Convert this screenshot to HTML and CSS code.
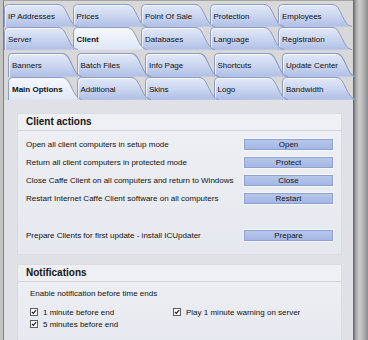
FILE: index.html
```html
<!DOCTYPE html>
<html>
<head>
<meta charset="utf-8">
<link rel="stylesheet" href="styles.css">
</head>
<body>
<div class="window">
  <div class="main">
    <div class="tabs outer">
      <div class="tabrow">
        <div class="tab">IP Addresses</div>
        <div class="tab">Prices</div>
        <div class="tab">Point Of Sale</div>
        <div class="tab">Protection</div>
        <div class="tab">Employees</div>
      </div>
      <div class="tabrow">
        <div class="tab">Server</div>
        <div class="tab active">Client</div>
        <div class="tab">Databases</div>
        <div class="tab">Language</div>
        <div class="tab">Registration</div>
      </div>
    </div>
    <div class="tabs inner">
      <div class="tabrow tall">
        <div class="tab">Banners</div>
        <div class="tab">Batch Files</div>
        <div class="tab">Info Page</div>
        <div class="tab">Shortcuts</div>
        <div class="tab">Update Center</div>
      </div>
      <div class="tabrow">
        <div class="tab active">Main Options</div>
        <div class="tab">Additional</div>
        <div class="tab">Skins</div>
        <div class="tab">Logo</div>
        <div class="tab">Bandwidth</div>
      </div>
    </div>
    <div class="panel">
      <section class="group">
        <div class="group-head">Client actions</div>
        <div class="group-body actions">
          <div class="row"><span>Open all client computers in setup mode</span><span class="btn">Open</span></div>
          <div class="row"><span>Return all client computers in protected mode</span><span class="btn">Protect</span></div>
          <div class="row"><span>Close Caffe Client on all computers and return to Windows</span><span class="btn">Close</span></div>
          <div class="row"><span>Restart Internet Caffe Client software on all computers</span><span class="btn">Restart</span></div>
          <div class="row spaced"><span>Prepare Clients for first update - install ICUpdater</span><span class="btn">Prepare</span></div>
        </div>
      </section>
      <section class="group second">
        <div class="group-head">Notifications</div>
        <div class="group-body notes">
          <div class="note">Enable notification before time ends</div>
          <div class="checks">
            <label class="chk"><span class="box"><svg viewBox="0 0 6 6" width="6" height="6"><path d="M0.9 2.9 L2.3 4.4 L5.1 1.2" fill="none" stroke="#1b1b1b" stroke-width="1.1"/></svg></span>1 minute before end</label>
            <label class="chk"><span class="box"><svg viewBox="0 0 6 6" width="6" height="6"><path d="M0.9 2.9 L2.3 4.4 L5.1 1.2" fill="none" stroke="#1b1b1b" stroke-width="1.1"/></svg></span>Play 1 minute warning on server</label>
            <label class="chk"><span class="box"><svg viewBox="0 0 6 6" width="6" height="6"><path d="M0.9 2.9 L2.3 4.4 L5.1 1.2" fill="none" stroke="#1b1b1b" stroke-width="1.1"/></svg></span>5 minutes before end</label>
          </div>
        </div>
      </section>
    </div>
  </div>
  <div class="scroll"></div>
</div>
</body>
</html>
```
FILE: styles.css
```css
html, body {
  margin: 0;
  padding: 0;
}
body {
  font-family: "Liberation Sans", Arial, sans-serif;
  font-size: 8px;
  color: #111111;
  background: #c8c8c8;
}
.window {
  display: flex;
  width: 368px;
  height: 340px;
  overflow: hidden;
  background: #c4c4c4;
  padding-left: 3px;
  box-sizing: border-box;
}
.main {
  flex: 0 0 350px;
  display: flex;
  flex-direction: column;
  border-left: 1px solid #808080;
  border-top: 1px solid #a4a4a4;
  background: #d8d8d8;
  box-sizing: border-box;
  padding-top: 3px;
}
.tabs {
  display: flex;
  flex-direction: column;
}
.inner {
  margin-top: 3px;
  padding-left: 4px;
}
.tabrow {
  display: flex;
  height: 23px;
}
.tabrow.tall {
  height: 24px;
}
.tab {
  position: relative;
  flex: 0 0 74px;
  margin-right: -5.5px;
  box-sizing: border-box;
  padding: 1px 0 0 4px;
  display: flex;
  align-items: center;
  white-space: nowrap;
  color: #111111;
  background: url("data:image/svg+xml;utf8,<svg xmlns='http://www.w3.org/2000/svg' width='74' height='23' viewBox='0 0 74 23' preserveAspectRatio='none'><defs><linearGradient id='g' x1='0' y1='0' x2='0' y2='1'><stop offset='0' stop-color='%23e3e9f7'/><stop offset='0.5' stop-color='%23cbd6f0'/><stop offset='1' stop-color='%23afbee6'/></linearGradient></defs><path d='M0.5,23 V4.5 Q0.5,0.5 4.5,0.5 H55 C63,0.5 65,22.5 74,22.5' fill='url(%23g)' stroke='%238e9bc0'/><path d='M1.5,23 V5 Q1.5,1.5 5,1.5 H54' fill='none' stroke='%23ffffff' stroke-opacity='0.7'/></svg>") no-repeat 0 0 / 100% 100%;
}
.tab.active {
  font-weight: bold;
  background: url("data:image/svg+xml;utf8,<svg xmlns='http://www.w3.org/2000/svg' width='74' height='23' viewBox='0 0 74 23' preserveAspectRatio='none'><defs><linearGradient id='g' x1='0' y1='0' x2='0' y2='1'><stop offset='0' stop-color='%23f6f8fd'/><stop offset='1' stop-color='%23dfe7f7'/></linearGradient></defs><path d='M0.5,23 V4.5 Q0.5,0.5 4.5,0.5 H55 C63,0.5 65,22.5 74,22.5' fill='url(%23g)' stroke='%238e9bc0'/></svg>") no-repeat 0 0 / 100% 100%;
}
.tabrow .tab:nth-child(1) { z-index: 5; }
.tabrow .tab:nth-child(2) { z-index: 4; }
.tabrow .tab:nth-child(3) { z-index: 3; }
.tabrow .tab:nth-child(4) { z-index: 2; }
.tabrow .tab:nth-child(5) { z-index: 1; }
.tab.active { z-index: 6; }

.panel {
  flex: 1;
  background: #dfe1e6;
  padding: 13px 11px 0 13px;
}
.group {
  background: linear-gradient(#eef0f5, #e5e8ee);
  border: 1px solid #d9dce2;
}
.group.second {
  margin-top: 9px;
}
.group-head {
  height: 16px;
  line-height: 16px;
  padding-left: 8px;
  font-size: 10px;
  font-weight: bold;
  color: #151515;
  background: #eff0f3;
  border-bottom: 1px solid #cfd3da;
}
.actions {
  padding: 4px 8px 10px 8px;
}
.row {
  display: flex;
  align-items: center;
  justify-content: space-between;
  height: 18px;
}
.row.spaced {
  margin-top: 19px;
}
.btn {
  width: 87px;
  height: 9px;
  line-height: 9px;
  text-align: center;
  border: 1px solid #8ea2d2;
  background: linear-gradient(#b7c7ec, #a4b7e3);
  box-shadow: 0 0 0 1px rgba(255, 255, 255, 0.55);
  color: #151515;
}
.notes {
  padding: 6px 0 20px 12px;
}
.note {
  height: 12px;
  line-height: 12px;
}
.checks {
  margin-top: 6px;
  display: grid;
  grid-template-columns: 143px auto;
  grid-auto-rows: 12px;
}
.chk {
  display: flex;
  align-items: center;
}
.box {
  width: 6px;
  height: 6px;
  border: 1px solid #5c5c5c;
  background: #fbfbfb;
  margin-right: 5px;
  display: flex;
}
.box svg {
  display: block;
}
.scroll {
  flex: 0 0 15px;
  background: linear-gradient(to right, #585858 0, #7d7d7d 1px, #a9a9a9 3px, #cbcbcb 6px, #bdbdbd 9px, #9c9c9c 13px, #8c8c8c 15px);
}
```
